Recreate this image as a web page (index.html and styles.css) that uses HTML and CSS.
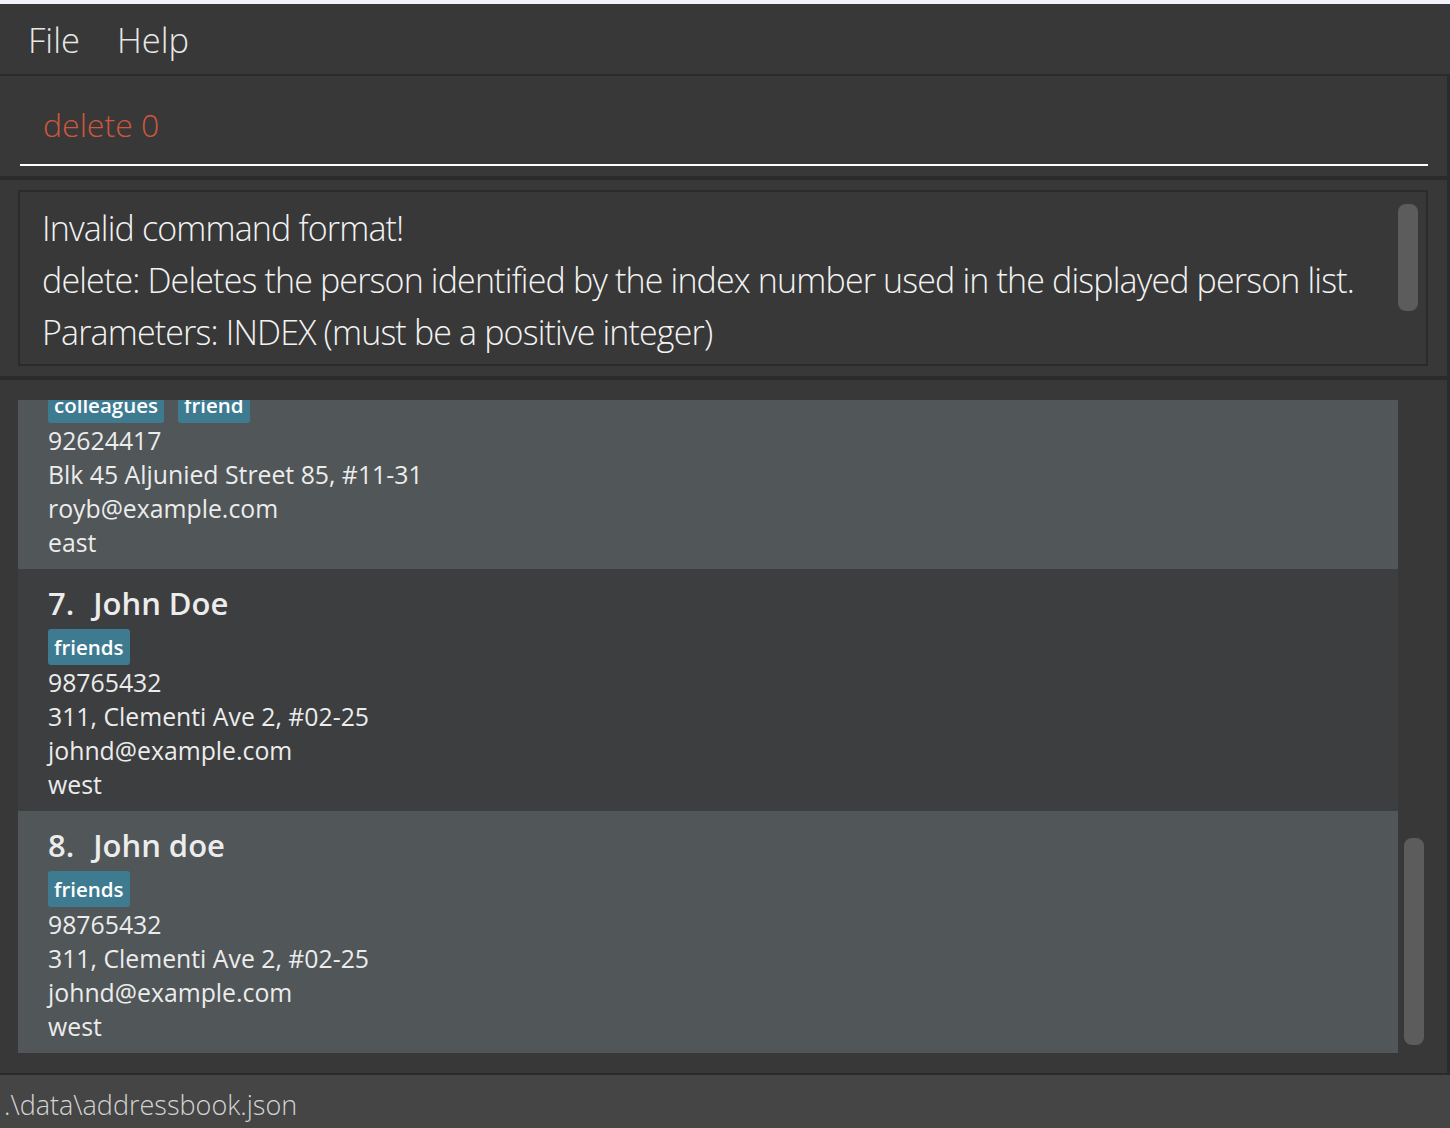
FILE: index.html
```html
<!DOCTYPE html>
<html>
<head>
<meta charset="utf-8">
<link rel="stylesheet" href="styles.css">
</head>
<body>
<div class="topstrip"></div>
<div class="menubar">
  <span class="menu-item">File</span>
  <span class="menu-item">Help</span>
</div>
<div class="main">
  <div class="command">
    <div class="command-field">delete 0</div>
  </div>
  <div class="result">
    <div class="result-box">
      <div class="result-text">
        <div>Invalid command format!</div>
        <div>delete: Deletes the person identified by the index number used in the displayed person list.</div>
        <div>Parameters: INDEX (must be a positive integer)</div>
      </div>
      <div class="result-track"><div class="result-thumb"></div></div>
    </div>
  </div>
  <div class="list">
    <div class="list-view">
      <div class="cards">
        <div class="card light first">
          <div class="name"><span class="idx">6.</span><span>Roy Balakrishnan</span></div>
          <div class="tags"><span class="tag">colleagues</span><span class="tag">friend</span></div>
          <div class="line">92624417</div>
          <div class="line">Blk 45 Aljunied Street 85, #11-31</div>
          <div class="line">royb@example.com</div>
          <div class="line">east</div>
        </div>
        <div class="card dark">
          <div class="name"><span class="idx">7.</span><span>John Doe</span></div>
          <div class="tags"><span class="tag">friends</span></div>
          <div class="line">98765432</div>
          <div class="line">311, Clementi Ave 2, #02-25</div>
          <div class="line">johnd@example.com</div>
          <div class="line">west</div>
        </div>
        <div class="card light">
          <div class="name"><span class="idx">8.</span><span>John doe</span></div>
          <div class="tags"><span class="tag">friends</span></div>
          <div class="line">98765432</div>
          <div class="line">311, Clementi Ave 2, #02-25</div>
          <div class="line">johnd@example.com</div>
          <div class="line">west</div>
        </div>
      </div>
      <div class="list-track"><div class="list-thumb"></div></div>
    </div>
  </div>
</div>
<div class="statusbar">.\data\addressbook.json</div>
</body>
</html>
```
FILE: styles.css
```css
html, body {
  margin: 0;
  padding: 0;
  background: #383838;
  overflow: hidden;
  width: 1450px;
  height: 1128px;
  font-family: "Open Sans", "Noto Sans", sans-serif;
}
.topstrip {
  height: 4px;
  background: #f4f2fa;
}
.menubar {
  display: flex;
  align-items: center;
  gap: 37px;
  padding-left: 28px;
  background: #383838;
  border-bottom: 2px solid #2b2b2b;
  box-sizing: border-box;
  height: 72px;
}
.menu-item {
  font-size: 34.5px;
  font-weight: 300;
  color: #e8e8e8;
  line-height: 1;
  margin-top: 2px;
}
.main {
  border-right: 3px solid #2b2b2b;
}
.command {
  height: 104px;
  box-sizing: border-box;
  padding: 0 19px 0 20px;
  border-bottom: 4px solid #2b2b2b;
}
.command-field {
  height: 90px;
  box-sizing: border-box;
  border-bottom: 2px solid #ffffff;
  padding: 26px 0 0 23px;
  font-size: 32px;
  font-weight: 300;
  color: #d0573c;
  line-height: 46px;
}
.result {
  height: 200px;
  box-sizing: border-box;
  padding: 10px 19px 0 18px;
  border-bottom: 4px solid #2b2b2b;
}
.result-box {
  height: 176px;
  box-sizing: border-box;
  border: 2px solid #2b2b2b;
  display: flex;
}
.result-text {
  flex: 1;
  min-width: 0;
  padding: 10px 0 0 22px;
  font-size: 34px;
  letter-spacing: -0.85px;
  font-weight: 300;
  line-height: 52px;
  color: #f2f2f2;
  white-space: nowrap;
  overflow: hidden;
}
.result-track {
  width: 20px;
  padding: 12px 8px 0 0;
}
.result-thumb {
  height: 107px;
  background: #5c5c5c;
  border-radius: 8px;
}
.list {
  height: 695px;
  box-sizing: border-box;
  padding: 20px 0 0 18px;
  border-bottom: 2px solid #2b2b2b;
}
.list-view {
  display: flex;
  height: 653px;
}
.cards {
  width: 1380px;
  height: 653px;
  overflow: hidden;
}
.list-track {
  width: 20px;
  margin-left: 6px;
  padding-top: 438px;
}
.list-thumb {
  height: 207px;
  background: #5c5c5c;
  border-radius: 8px;
}
.card {
  height: 242px;
  box-sizing: border-box;
  padding: 14px 0 0 30px;
  color: #ececec;
}
.card.first {
  margin-top: -73px;
}
.card.light {
  background: #515658;
}
.card.dark {
  background: #3c3e3f;
}
.name {
  display: flex;
  gap: 19px;
  font-size: 31px;
  font-weight: 600;
  line-height: 40px;
  height: 40px;
  color: #ececec;
}
.tags {
  display: flex;
  gap: 14px;
  margin-top: 6px;
  height: 36px;
}
.tag {
  background: #3e7b91;
  color: #ffffff;
  border-radius: 3px;
  font-size: 20.5px;
  font-weight: 600;
  line-height: 36px;
  padding: 0 6px;
}
.line {
  font-size: 24.8px;
  line-height: 34px;
  height: 34px;
  color: #ececec;
}
.statusbar {
  height: 53px;
  background: #454545;
  color: #d4d4d4;
  font-size: 27px;
  font-weight: 300;
  line-height: 60px;
  padding-left: 4px;
  white-space: nowrap;
}
```
